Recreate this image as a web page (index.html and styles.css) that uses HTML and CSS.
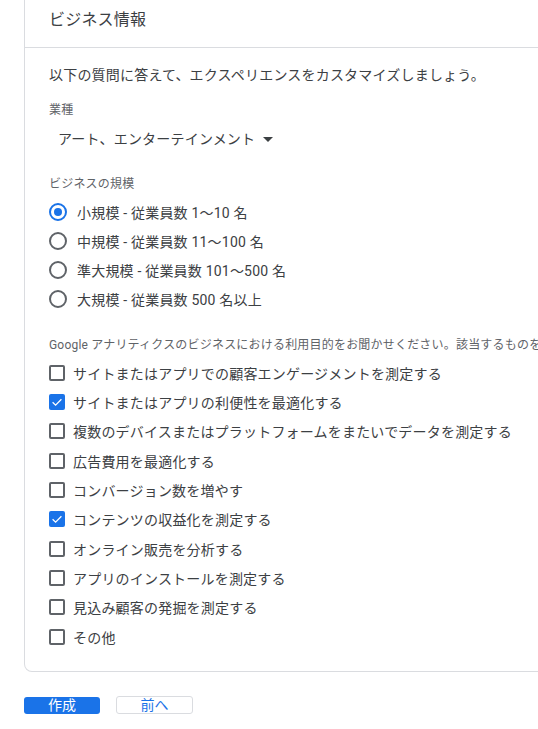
FILE: index.html
```html
<!DOCTYPE html>
<html lang="ja">
<head>
<meta charset="utf-8">
<link rel="stylesheet" href="styles.css">
</head>
<body>
<div class="page">
  <section class="card">
    <header class="card-header">ビジネス情報</header>
    <div class="card-body">
      <p class="intro">以下の質問に答えて、エクスペリエンスをカスタマイズしましょう。</p>
      <div class="label label-type">業種</div>
      <div class="select">アート、エンターテインメント<span class="caret"></span></div>

      <div class="label label-size">ビジネスの規模</div>
      <div class="radios">
        <div class="row"><span class="radio on"></span><span class="radio-text">小規模 - 従業員数 1〜10 名</span></div>
        <div class="row"><span class="radio"></span><span class="radio-text">中規模 - 従業員数 11〜100 名</span></div>
        <div class="row"><span class="radio"></span><span class="radio-text">準大規模 - 従業員数 101〜500 名</span></div>
        <div class="row"><span class="radio"></span><span class="radio-text">大規模 - 従業員数 500 名以上</span></div>
      </div>

      <div class="label label-use">Google アナリティクスのビジネスにおける利用目的をお聞かせください。該当するものをすべて選択してください。</div>
      <div class="checks">
        <div class="crow"><span class="cb"></span><span>サイトまたはアプリでの顧客エンゲージメントを測定する</span></div>
        <div class="crow"><span class="cb on"><svg viewBox="0 0 16 16" width="16" height="16"><path d="M3.6 8.2 L6.6 11.1 L12.4 5.2" fill="none" stroke="#fff" stroke-width="1.3"/></svg></span><span>サイトまたはアプリの利便性を最適化する</span></div>
        <div class="crow"><span class="cb"></span><span>複数のデバイスまたはプラットフォームをまたいでデータを測定する</span></div>
        <div class="crow"><span class="cb"></span><span>広告費用を最適化する</span></div>
        <div class="crow"><span class="cb"></span><span>コンバージョン数を増やす</span></div>
        <div class="crow"><span class="cb on"><svg viewBox="0 0 16 16" width="16" height="16"><path d="M3.6 8.2 L6.6 11.1 L12.4 5.2" fill="none" stroke="#fff" stroke-width="1.3"/></svg></span><span>コンテンツの収益化を測定する</span></div>
        <div class="crow"><span class="cb"></span><span>オンライン販売を分析する</span></div>
        <div class="crow"><span class="cb"></span><span>アプリのインストールを測定する</span></div>
        <div class="crow"><span class="cb"></span><span>見込み顧客の発掘を測定する</span></div>
        <div class="crow"><span class="cb"></span><span>その他</span></div>
      </div>
    </div>
  </section>
  <div class="actions">
    <button class="btn primary">作成</button>
    <button class="btn secondary">前へ</button>
  </div>
</div>
</body>
</html>
```

FILE: styles.css
```css
html, body {
  margin: 0;
  padding: 0;
  overflow: hidden;
  background: #fff;
}
body {
  font-family: Roboto, "Noto Sans CJK JP", sans-serif;
  color: #3c4043;
}
.page {
  padding-left: 24px;
  width: 700px;
}
.card {
  width: 640px;
  border: 1px solid #dadce0;
  border-top: 0;
  border-radius: 0 0 8px 8px;
  padding-bottom: 20px;
}
.card-header {
  height: 48px;
  box-sizing: border-box;
  padding: 8px 24px 0;
  font-size: 16px;
  line-height: 24px;
  letter-spacing: 0.2px;
  border-bottom: 1px solid #dadce0;
  color: #3c4043;
}
.card-body {
  padding: 17px 24px 0;
}
.intro {
  margin: 0;
  font-size: 14px;
  line-height: 20px;
  letter-spacing: 0.2px;
  color: #3c4043;
}
.label {
  font-size: 12px;
  line-height: 16px;
  letter-spacing: 0.2px;
  color: #5f6368;
  white-space: nowrap;
}
.label-type {
  margin-top: 17px;
}
.select {
  margin-top: 11px;
  padding-left: 9px;
  font-size: 14px;
  line-height: 20px;
  letter-spacing: 0.2px;
  display: flex;
  align-items: center;
  color: #3c4043;
}
.caret {
  margin-left: 8px;
  width: 0;
  height: 0;
  border-left: 5px solid transparent;
  border-right: 5px solid transparent;
  border-top: 5px solid #3c4043;
}
.label-size {
  margin-top: 27px;
}
.radios {
  margin-top: 5px;
}
.row {
  height: 29px;
  display: flex;
  align-items: center;
  font-size: 14px;
  letter-spacing: 0.2px;
}
.radio {
  width: 18px;
  height: 18px;
  box-sizing: border-box;
  border: 2px solid #5f6368;
  border-radius: 50%;
  margin-right: 10px;
  display: flex;
  align-items: center;
  justify-content: center;
  flex: none;
}
.radio.on {
  border-color: #1a73e8;
}
.radio.on::after {
  content: "";
  width: 8px;
  height: 8px;
  border-radius: 50%;
  background: #1a73e8;
}
.label-use {
  margin-top: 24px;
}
.checks {
  margin-top: 5px;
}
.crow {
  height: 29.33px;
  display: flex;
  align-items: center;
  font-size: 14px;
  letter-spacing: 0.2px;
  white-space: nowrap;
}
.cb {
  width: 16px;
  height: 16px;
  box-sizing: border-box;
  border: 2px solid #5f6368;
  border-radius: 2px;
  margin-right: 8px;
  flex: none;
}
.cb.on {
  border: 0;
  background: #1a73e8;
}
.cb svg {
  display: block;
}
.actions {
  margin-top: 24px;
  display: flex;
  align-items: center;
  gap: 16px;
}
.btn {
  font-family: Roboto, "Noto Sans CJK JP", sans-serif;
  font-size: 14px;
  line-height: 16px;
  padding: 0;
  border-radius: 3px;
  cursor: pointer;
}
.primary {
  width: 76px;
  height: 17px;
  background: #1a73e8;
  color: #fff;
  border: 0;
}
.secondary {
  width: 77px;
  height: 18px;
  background: #fff;
  color: #1a73e8;
  border: 1px solid #dadce0;
}
```
